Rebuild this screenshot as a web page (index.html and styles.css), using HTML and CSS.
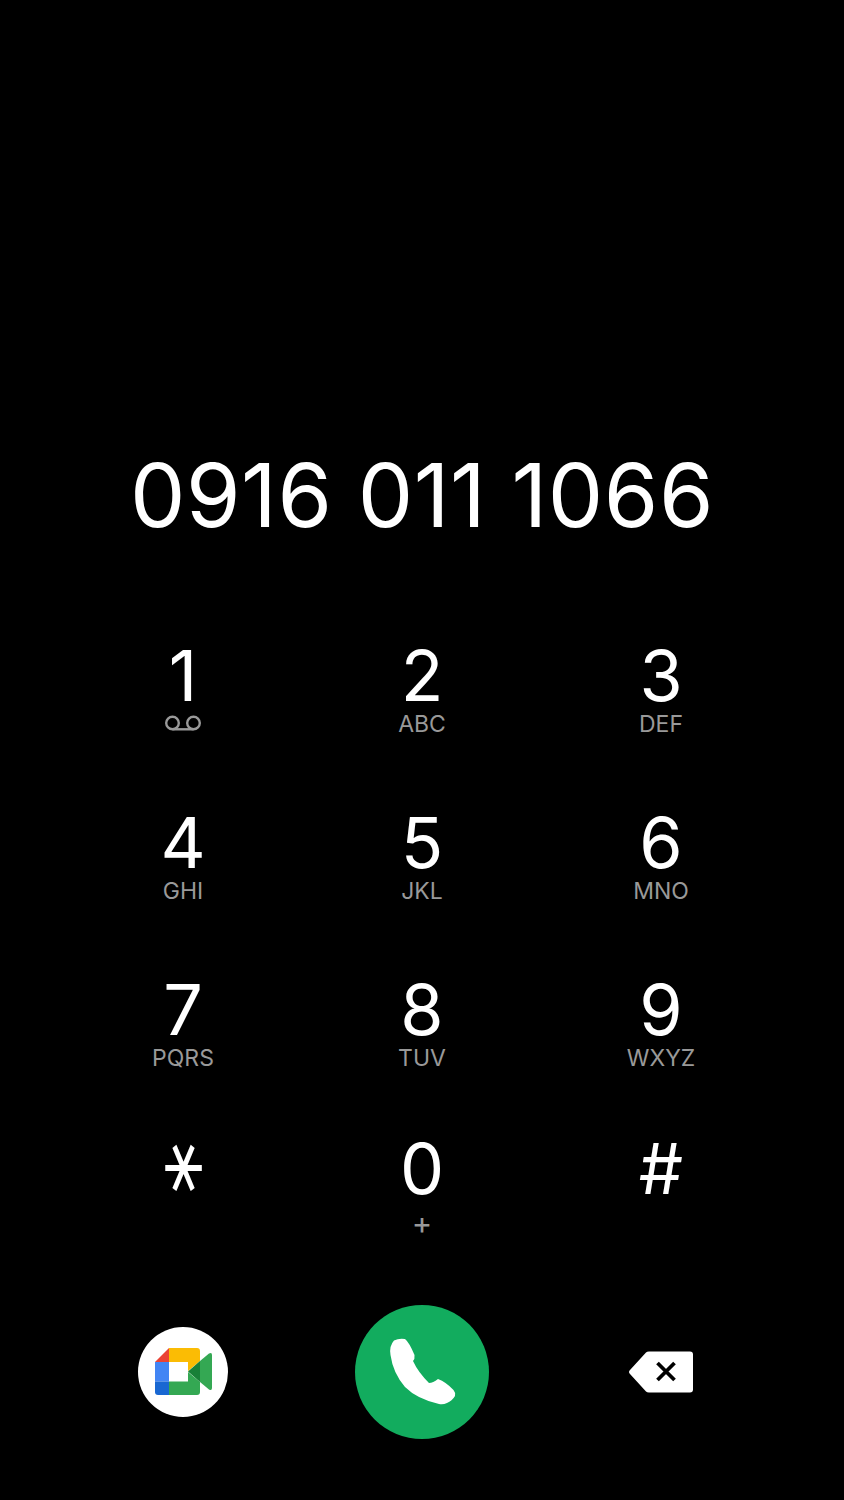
FILE: index.html
```html
<!DOCTYPE html>
<html lang="en">
<head>
    <meta charset="UTF-8">
    <title>Dialer</title>
    <link rel="stylesheet" href="styles.css">
</head>
<body>
<div id="dialer">
    <div class="number">0916 011 1066</div>
    <div class="keypad">
        <div class="key"><span class="digit">1</span>
            <svg class="vm" width="38" height="16" viewBox="0 0 38 16"><g fill="none" stroke="#999" stroke-width="2.4"><circle cx="8.500" cy="8" r="6.300"/><circle cx="29.500" cy="8" r="6.300"/><path d="M8.500 14.300h21"/></g></svg>
        </div>
        <div class="key"><span class="digit">2</span><span class="sub">ABC</span></div>
        <div class="key"><span class="digit">3</span><span class="sub">DEF</span></div>
        <div class="key"><span class="digit">4</span><span class="sub">GHI</span></div>
        <div class="key"><span class="digit">5</span><span class="sub">JKL</span></div>
        <div class="key"><span class="digit">6</span><span class="sub">MNO</span></div>
        <div class="key"><span class="digit">7</span><span class="sub">PQRS</span></div>
        <div class="key"><span class="digit">8</span><span class="sub">TUV</span></div>
        <div class="key"><span class="digit">9</span><span class="sub">WXYZ</span></div>
        <div class="key low"><span class="digit star">⚹</span></div>
        <div class="key low"><span class="digit">0</span><span class="sub plus">+</span></div>
        <div class="key low"><span class="digit">#</span></div>
    </div>
    <div class="actions">
        <div class="meet">
            <svg width="90" height="90" viewBox="0 0 90 90">
                <path fill="#ea4335" d="M31 21v14H17z"/>
                <path fill="#fbbc04" d="M31 21h28q3 0 3 3v10L50 44v-9H31z"/>
                <path fill="#4285f4" d="M17 35h14v19.500H17z"/>
                <path fill="#1967d2" d="M17 54.500h14V68H20q-3 0-3-3z"/>
                <path fill="#34a853" d="M31 54.500h19V45l12 10v10q0 3-3 3H31z"/>
                <path fill="#188038" d="M50 44.500l12-10.500v21z"/>
                <path fill="#34a853" d="M62 34l9-7.500q3-1.500 3 1.500v33q0 3-3 1.500l-9-7.500z"/>
            </svg>
        </div>
        <div class="call">
            <svg width="134" height="134" viewBox="0 0 134 134"><path fill="#fff" d="M39 35.500Q44 33 50 34Q54 37 59.500 50Q60 54 58 56Q63 67 74 78Q78 78 83 74Q91 77 98.500 85Q101 88 100 91Q97 96 92 98Q88 100 84 99Q62 94 50 82Q38 68 35.500 50Q34 41 39 35.500Z"/></svg>
        </div>
        <div class="back">
            <svg width="66" height="42" viewBox="0 0 66 42"><path fill="#fff" d="M21 .5h41q3 0 3 3v35q0 3-3 3H21q-2 0-3-1L2 23q-2-2 0-4L18 1.500q1-1 3-1z"/><path fill="none" stroke="#000" stroke-width="3.800" d="M29.500 12l17 17M46.500 12l-17 17"/></svg>
        </div>
    </div>
</div>
</body>
</html>
```
FILE: styles.css
```css
*{
    margin:0;
    padding:0;
    box-sizing: border-box;
}
body{
    background-color: #000;
    color: #fff;
    font-family: Inter, "Liberation Sans", sans-serif;
}
#dialer{
    width: 844px;
    height: 1500px;
    padding-top: 440px;
    overflow: hidden;
}
.number{
    height: 110px;
    line-height: 110px;
    text-align: center;
    font-size: 88px;
    font-weight: 400;
    letter-spacing: 0.5px;
    white-space: nowrap;
}
.keypad{
    display: grid;
    grid-template-columns: repeat(3, 239px);
    grid-auto-rows: 167px;
    justify-content: center;
    margin-top: 86px;
}
.key{
    display: flex;
    flex-direction: column;
    align-items: center;
    padding-top: 5px;
}
.key.low{
    margin-top: -8px;
}
.digit{
    height: 69px;
    line-height: 69px;
    font-size: 70px;
    font-weight: 400;
}
.star{
    font-family: "DejaVu Sans", sans-serif;
    font-size: 62px;
    transform: translateY(-10px) scale(1.05,1.45);
}
.sub{
    height: 28px;
    line-height: 28px;
    font-size: 23px;
    color: #999;
}
.plus{
    margin-top: 6px;
    font-size: 31px;
}
.vm{
    margin-top: 5px;
}
.actions{
    display: grid;
    grid-template-columns: repeat(3, 239px);
    justify-content: center;
    align-items: center;
    justify-items: center;
    margin-top: 1px;
}
.meet{
    width: 90px;
    height: 90px;
    border-radius: 50%;
    background-color: #fff;
}
.call{
    width: 134px;
    height: 134px;
    border-radius: 50%;
    background-color: #12ac5e;
}
.meet svg,.call svg,.back svg{
    display: block;
}
```
